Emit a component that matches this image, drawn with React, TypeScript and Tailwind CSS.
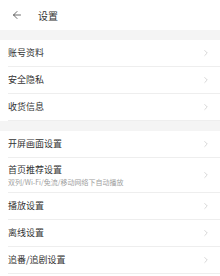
import { ArrowLeft, ChevronRight } from 'lucide-react';

type Row = { title: string; sub?: string };

const sections: Row[][] = [
  [{ title: '账号资料' }, { title: '安全隐私' }, { title: '收货信息' }],
  [
    { title: '开屏画面设置' },
    { title: '首页推荐设置', sub: '双列/Wi-Fi/免流/移动网络下自动播放' },
    { title: '播放设置' },
    { title: '离线设置' },
    { title: '追番/追剧设置' },
  ],
];

function SettingRow({ row }: { row: Row }) {
  return (
    <div className="pl-2">
      <div
        className={`flex items-center border-b border-[#eeeeee] pr-[9px] ${row.sub ? 'h-[35px]' : 'h-[27px]'}`}
      >
        <div className="flex-1 min-w-0">
          <p className="text-[9px] leading-[12px] text-[#333333]">{row.title}</p>
          {row.sub && (
            <p className="text-[7px] leading-[10px] mt-[1px] text-[#a0a0a0] whitespace-nowrap">{row.sub}</p>
          )}
        </div>
        <ChevronRight size={10} strokeWidth={1.5} className="text-[#bdbdbd]" />
      </div>
    </div>
  );
}

export default function App() {
  return (
    <div
      className="w-[220px] h-[276px] bg-white overflow-hidden"
      style={{ fontFamily: '"Noto Sans CJK SC", "Noto Sans", sans-serif' }}
    >
      {/* 헤더 */}
      <div className="h-[30px] flex items-center pl-[11px] gap-[15px] bg-white">
        <ArrowLeft size={12} strokeWidth={1.6} className="text-[#444444]" />
        <span className="text-[10px] text-[#333333]">设置</span>
      </div>

      {sections.map((rows, i) => (
        <div key={i}>
          <div className="h-[10px] bg-[#f4f4f4]" />
          <div className="bg-white">
            {rows.map((row) => (
              <SettingRow key={row.title} row={row} />
            ))}
          </div>
        </div>
      ))}
    </div>
  );
}
